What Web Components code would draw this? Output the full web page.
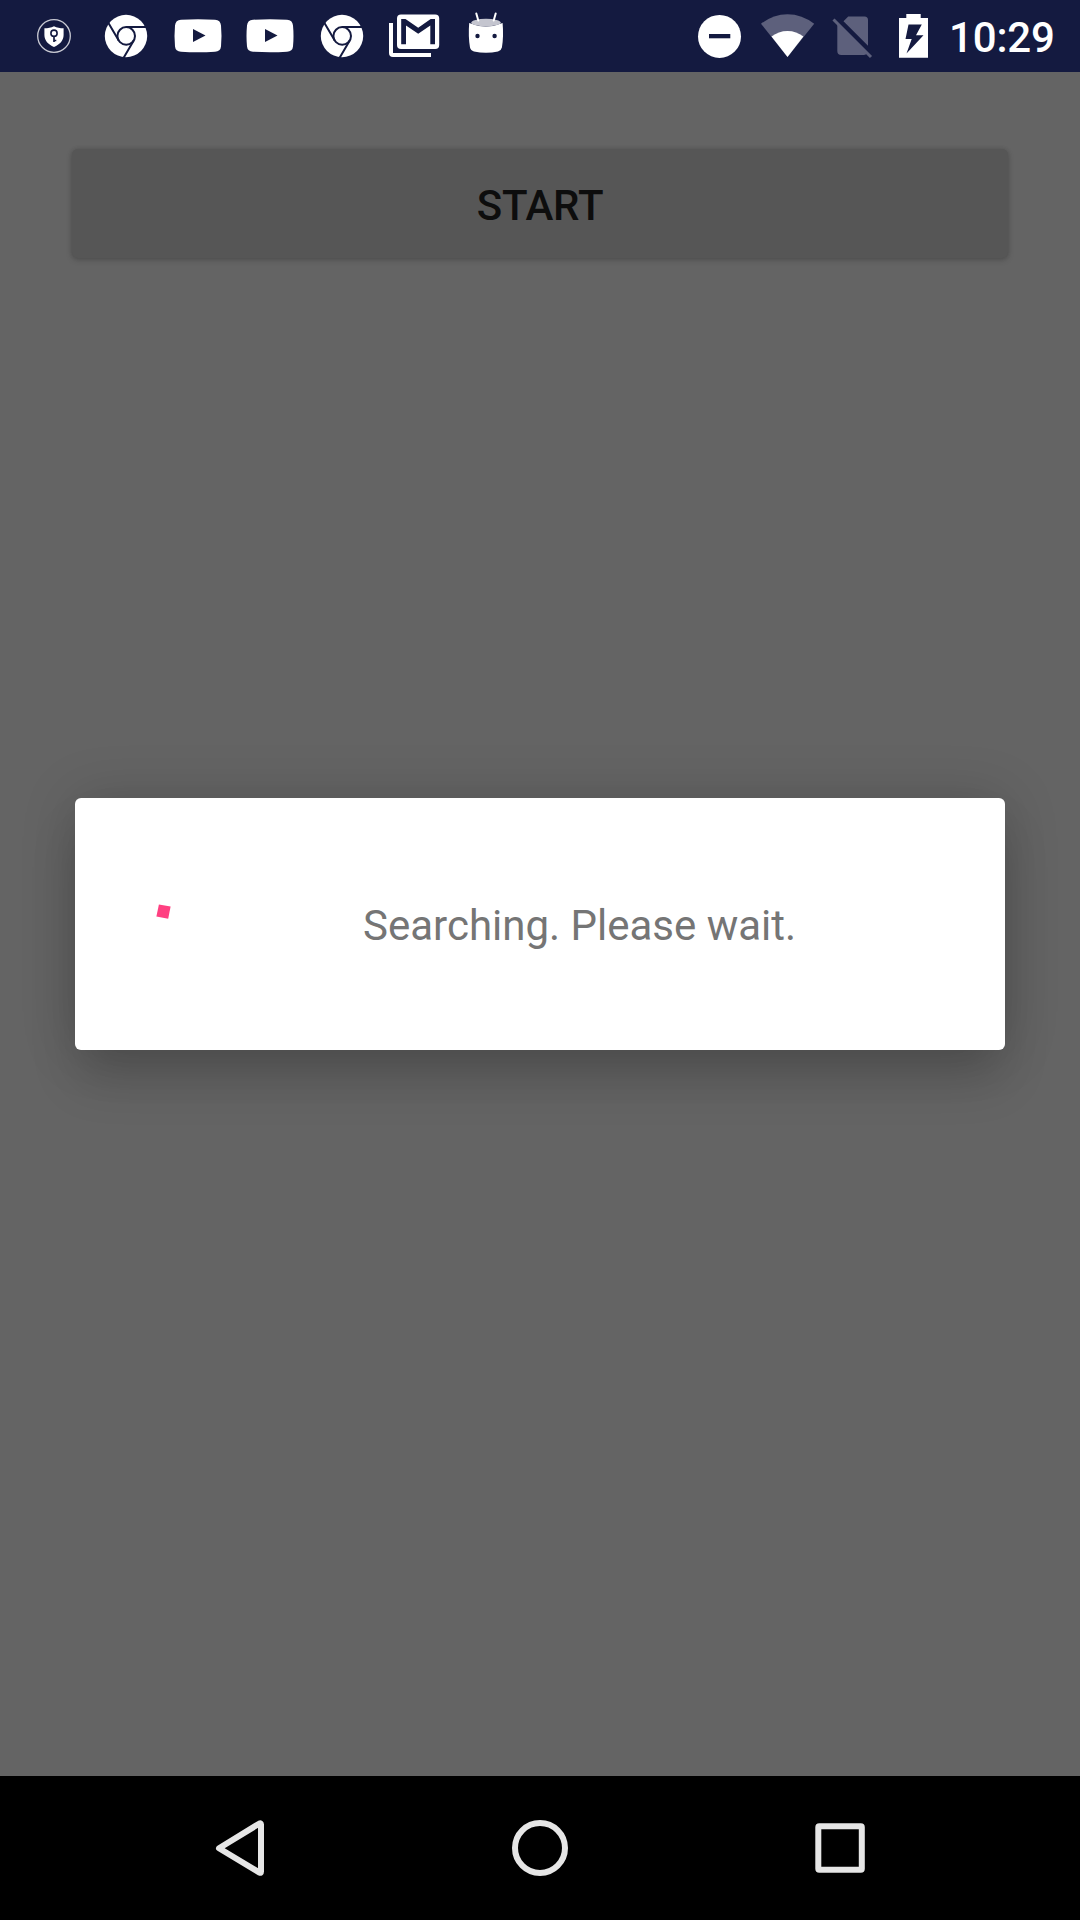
<!DOCTYPE html>
<html lang="en">
<head>
<meta charset="utf-8">
<title>Search</title>
<style>
html,body{margin:0;padding:0;background:#000}
</style>
</head>
<body>
<phone-screen>
  <status-bar slot="status" time="10:29">
    <status-icon name="shield"></status-icon>
    <status-icon name="chrome"></status-icon>
    <status-icon name="youtube"></status-icon>
    <status-icon name="youtube"></status-icon>
    <status-icon name="chrome"></status-icon>
    <status-icon name="gmail"></status-icon>
    <status-icon name="android"></status-icon>
    <status-icon slot="system" name="system"></status-icon>
  </status-bar>
  <raised-button>START</raised-button>
  <progress-dialog slot="dialog">Searching. Please wait.</progress-dialog>
  <nav-bar slot="nav"></nav-bar>
</phone-screen>
<script>
const define = (name, html) => customElements.define(name, class extends HTMLElement {
  constructor() {
    super();
    this.attachShadow({mode: 'open'}).innerHTML = html;
  }
});

const ICONS = {
  shield: `<svg width="72" height="72" viewBox="18 0 72 72"><circle cx="54" cy="36" r="16.300" fill="none" stroke="#c9cad3" stroke-width="1.300"/><path d="M54 26.300c3 1.600 6 2 9.600 2V35c0 5.500-3.800 9.500-9.600 12-5.800-2.500-9.600-6.500-9.600-12v-6.700c3.600 0 6.600-.4 9.600-2z" fill="#fff"/><circle cx="54" cy="33.200" r="3.100" fill="none" stroke="#141a40" stroke-width="1.600"/><path d="M54 36v6M54.300 40.500h2" stroke="#141a40" stroke-width="1.700"/></svg>`,
  chrome: `<svg width="72" height="72" viewBox="90 0 72 72"><circle cx="126" cy="36" r="21.200" fill="#fff"/><g fill="none" stroke="#141a40" stroke-width="2"><circle cx="126.200" cy="35.900" r="8.800"/><path d="M126.200 27.100H148M108.300 22.700l10.300 17.600M133.900 40.200L123.500 58"/></g></svg>`,
  youtube: `<svg width="72" height="72" viewBox="162 0 72 72"><path d="M181 19.700Q198 18.600 215 19.700Q220.500 20 221 25.500Q222 36 221 46.500Q220.500 51.400 215 51.700Q198 52.700 181 51.700Q175.500 51.400 175 46.500Q174 36 175 25.500Q175.500 20 181 19.700z" fill="#fff"/><path d="M193 29l12.500 6.600L193 42z" fill="#141a40"/></svg>`,
  gmail: `<svg width="72" height="72" viewBox="378 0 72 72"><path d="M389 23h4v30h38v4h-38q-4 0-4-4z" fill="#fff"/><rect x="397" y="14.600" width="42.200" height="34.400" rx="4" fill="#fff"/><path d="M401.200 44.300V19h4.300l12.700 8.800L430.700 19h4.300v25.300h-4.700V25.500l-12.100 8.300-12.200-8.300v18.800z" fill="#141a40"/></svg>`,
  android: `<svg width="72" height="72" viewBox="450 0 72 72"><path d="M469.200 23Q486 30 502.600 23Q503.800 36 501.900 47.500Q501.300 50.500 498 51.400Q486 54.200 474 51.400Q470.600 50.500 470 47.500Q468.100 36 469.200 23z" fill="#fff"/><ellipse cx="486" cy="22.600" rx="14.800" ry="3.800" fill="#c4c5cf"/><path d="M476.300 13.500l2 7M495.700 13.500l-2 7" stroke="#fff" stroke-width="2" stroke-linecap="round"/><circle cx="477.500" cy="36" r="2.200" fill="#141a40"/><circle cx="494.600" cy="36" r="2.200" fill="#141a40"/></svg>`,
  system: `<svg width="250" height="72" viewBox="690 0 250 72"><circle cx="719.500" cy="36.400" r="21.500" fill="#fff"/><path d="M709 34h21.300v4.300H709z" fill="#141a40"/><path d="M787.500 57L761 23.800Q773 14.200 787.500 14.200T814.200 23.800z" fill="#5d607c"/><path d="M787.500 57L771.500 36.600Q778.500 31 787.500 31T803.400 36.600z" fill="#fff"/><path d="M848.200 16.500H864.500Q868 16.500 868 20V45.700L843.500 21.200zM837.300 23.500L867 53.200Q866 55 864 55H841.300Q837.300 55 837.300 51z" fill="#5d607c"/><path d="M833.500 19.500L871 57" stroke="#5d607c" stroke-width="3"/><path d="M899 18h7.300v-4h14.400v4H928v39.700h-29z" fill="#fff"/><path d="M908.500 24.500H921.800L916 35.300H923.500L906.500 53.500L911.700 39H905.500z" fill="#141a40"/></svg>`
};

customElements.define('status-icon', class extends HTMLElement {
  constructor() { super(); this.attachShadow({mode: 'open'}); }
  connectedCallback() {
    this.shadowRoot.innerHTML = `<style>:host{display:block;flex:none}svg{display:block}</style>${ICONS[this.getAttribute('name')]}`;
  }
});

customElements.define('status-bar', class extends HTMLElement {
  constructor() { super(); this.attachShadow({mode: 'open'}); }
  connectedCallback() {
    this.shadowRoot.innerHTML = `<style>
      :host{display:flex;justify-content:space-between;height:72px;background:#141a40;padding:0 25px 0 18px;box-sizing:border-box}
      div{display:flex}
      time{width:106px;padding-top:4px;line-height:68px;font-size:42px;font-weight:500;letter-spacing:-.15px;color:#fff;white-space:nowrap}
      .sys{gap:9px}
      </style><div><slot></slot></div><div class="sys"><slot name="system"></slot><time>${this.getAttribute('time')}</time></div>`;
  }
});

define('raised-button', `<style>
  :host{display:block}
  button{display:block;width:100%;height:109px;padding:4px 0 0;border:0;border-radius:6px;background:#565656;color:#0d0d0d;font:500 42px/105px Roboto,sans-serif;letter-spacing:-.2px;
    box-shadow:0 2px 6px rgba(0,0,0,.18),0 0 4px rgba(0,0,0,.12)}
  </style><button><slot></slot></button>`);

define('progress-dialog', `<style>
  :host{display:flex;align-items:center;box-sizing:border-box;width:930px;height:252px;padding:3px 72px 0 81px;border-radius:6px;background:#fff;color:#757575;font-size:42px;line-height:49px;
    box-shadow:0 32px 50px -4px rgba(0,0,0,.165),0 0 56px rgba(0,0,0,.16)}
  svg{display:block;flex:none;margin-right:63px}
  </style><svg width="144" height="144" viewBox="0 -2 144 144"><path d="M2.900 48.500L14.600 50.500L12.200 62.800L.4 60.500z" fill="#ff4081"/></svg><span><slot></slot></span>`);

define('nav-bar', `<style>
  :host{display:flex;justify-content:center;height:144px;background:#000}
  svg{display:block;width:300px;height:144px}
  g{fill:none;stroke:#e6e6e6;stroke-width:6;stroke-linejoin:round}
  </style>
  <svg viewBox="90 1776 300 144"><g><path d="M219 1848.200L259.500 1823.500Q261 1822.800 261 1824.500V1871.500Q261 1873.400 259.500 1872.600z"/></g></svg>
  <svg viewBox="390 1776 300 144"><g><circle cx="540" cy="1848" r="25"/></g></svg>
  <svg viewBox="690 1776 300 144"><g><rect x="818.300" y="1826.200" width="43.500" height="43.500" rx="1"/></g></svg>`);

define('phone-screen', `<style>
  :host{display:flex;flex-direction:column;width:1080px;height:1920px;overflow:hidden;background:#646464;font-family:Roboto,sans-serif}
  main{flex:1;display:flex;flex-direction:column;align-items:center}
  .content{width:936px;height:649px;padding-top:77px}
  </style>
  <slot name="status"></slot>
  <main><div class="content"><slot></slot></div><slot name="dialog"></slot></main>
  <slot name="nav"></slot>`);
</script>
</body>
</html>
